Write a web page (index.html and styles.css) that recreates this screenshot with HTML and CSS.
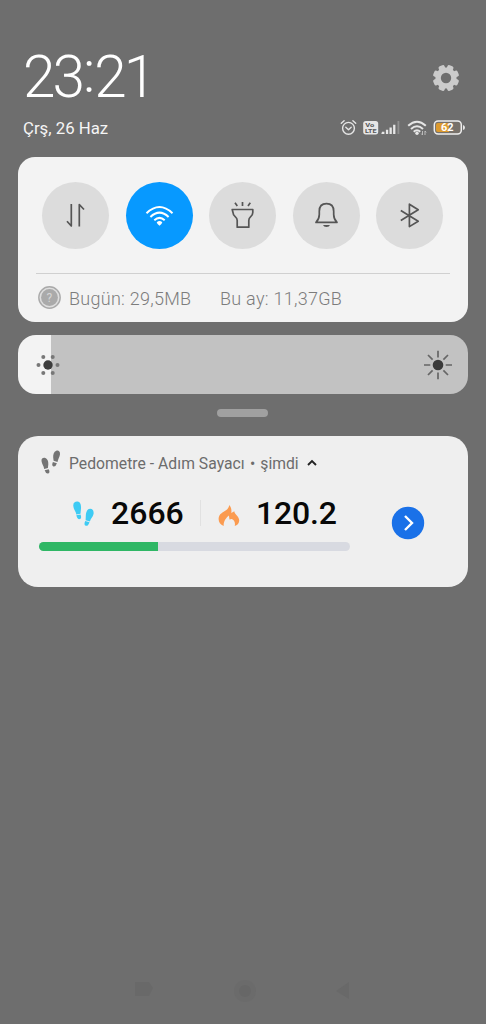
FILE: index.html
```html
<!DOCTYPE html>
<html lang="tr">
<head>
<meta charset="utf-8">
<title>Bildirimler</title>
<link rel="stylesheet" href="styles.css">
</head>
<body>
<main class="shade">
  <header class="header">
    <div class="clock-row">
      <div class="clock">23<span class="colon">:</span>21</div>
      <svg class="gear" width="28" height="28" viewBox="-14 -14 28 28">
        <g fill="#cbcbcb">
          <rect x="-3.2" y="-13.200" width="6.4" height="26.400" rx="1.800" transform="rotate(22.5)"/>
          <rect x="-3.2" y="-13.200" width="6.4" height="26.400" rx="1.800" transform="rotate(67.5)"/>
          <rect x="-3.2" y="-13.200" width="6.4" height="26.400" rx="1.800" transform="rotate(112.5)"/>
          <rect x="-3.2" y="-13.200" width="6.4" height="26.400" rx="1.800" transform="rotate(157.5)"/>
          <circle r="10.6"/>
        </g>
        <circle r="5.2" fill="#6e6e6e"/>
      </svg>
    </div>
    <div class="status-row">
      <div class="date">Çrş, 26 Haz</div>
      <svg class="status" width="130" height="20" viewBox="338 118 130 20">
        <g fill="none" stroke="#e6e6e6" stroke-width="1.4" stroke-linecap="round" stroke-linejoin="round">
          <circle cx="348.5" cy="128.3" r="5.9"/>
          <path d="M345.8 127.3l2.7 2.4 2.7-2.4M341.3 123.2l2.8-2.5M355.7 123.2l-2.8-2.5"/>
        </g>
        <rect x="363.2" y="121" width="15" height="13.4" rx="2.6" fill="#e6e6e6"/>
        <text class="volte" x="365.2" y="127.3" textLength="9" lengthAdjust="spacingAndGlyphs">Vo</text>
        <text class="volte" x="365" y="133.3" textLength="11.500" lengthAdjust="spacingAndGlyphs">LTE</text>
        <g fill="#e6e6e6">
          <path d="M382 131.7h2.4v2.3H381.300zM385.900 129.800h2.300v4.200h-2.300zM389.500 127.500h2.300v6.500h-2.300zM393.100 124.700h2.300v9.300h-2.300z"/>
          <path d="M397.500 121h1.800v13h-1.800z" fill="#909090"/>
        </g>
        <g fill="none" stroke="#e6e6e6" stroke-width="2">
          <path d="M408.200 125.700q8.800-8 17.600 0M411 128.900q6-5.300 12 0M413.700 131.700q3.300-2.800 6.600 0"/>
        </g>
        <circle cx="417" cy="133.200" r="1.700" fill="#e6e6e6"/>
        <path d="M422.500 135v-4M422.500 135l-1.200-1.400M425 131v4M425 131l1.200 1.400" stroke="#c4c4c4" stroke-width=".9" fill="none"/>
        <rect x="434.300" y="121" width="27" height="13" rx="3.800" fill="#77716a" stroke="#eee" stroke-width="1.500"/>
        <path d="M438 123h11v9h-11q-2 0-2-2v-5q0-2 2-2z" fill="#dc9a2e"/>
        <path d="M463 125q2 .5 2 2.500t-2 2.500z" fill="#e6e6e6"/>
        <text class="battery" x="441" y="131.300" textLength="12.500" lengthAdjust="spacingAndGlyphs">62</text>
      </svg>
    </div>
  </header>

  <section class="panel">
    <div class="toggles">
      <div class="toggle">
        <svg width="67" height="67" viewBox="0 0 67 67">
          <path class="line" d="M29.300 22v22l-4.300-4.800M37.300 44.500V22.500l4.700 5"/>
        </svg>
      </div>
      <div class="toggle toggle-on">
        <svg width="67" height="67" viewBox="0 0 67 67">
          <g fill="none" stroke="#fff" stroke-width="2">
            <path d="M20.500 31.200q13-12.400 26 0M24.400 34.900q9.100-8.500 18.200 0M28.300 38.200q5.200-4.600 10.400 0"/>
          </g>
          <path d="M30.700 40.200q2.800-2.300 5.600 0-.4 1.900-2.800 3.600-2.400-1.700-2.800-3.600z" fill="#fff"/>
        </svg>
      </div>
      <div class="toggle">
        <svg width="67" height="67" viewBox="0 0 67 67">
          <path class="line" d="M23.200 27.500h20.600v3q0 2.500-2.300 4.400-1.700 1.400-1.700 3.600v6.700H28.200v-6.700q0-2.200-1.800-3.600-2.400-1.900-2.400-4.400zM33.500 20v4M26 20.800l2.300 3.200M41.300 20.800l-2.300 3.200"/>
        </svg>
      </div>
      <div class="toggle">
        <svg width="67" height="67" viewBox="0 0 67 67">
          <path class="line" d="M23 40.400q3.300-3.400 3.300-8v-3.200q0-7.600 7.200-7.600t7.200 7.600v3.200q0 4.600 3.300 8z"/>
          <path d="M30 42.900h7q-.8 2-3.500 2t-3.500-2z" fill="#555"/>
        </svg>
      </div>
      <div class="toggle">
        <svg width="67" height="67" viewBox="0 0 67 67">
          <path class="line" d="M24.800 28.500l17.400 10.700-8.800 5.400V22.200l8.800 5.600-17.400 10.700"/>
        </svg>
      </div>
    </div>
    <div class="usage">
      <svg width="24" height="24" viewBox="0 0 24 24">
        <circle cx="12.500" cy="11.500" r="10.700" fill="#dedede" stroke="#aaa" stroke-width="1.400"/>
        <circle cx="12.500" cy="11.500" r="8.400" fill="#aaa"/>
        <text class="help" x="12.500" y="15.500" text-anchor="middle">?</text>
      </svg>
      <span class="today">Bugün: 29,5MB</span>
      <span class="month">Bu ay: 11,37GB</span>
    </div>
  </section>

  <section class="brightness">
    <svg width="28" height="28" viewBox="-14 -14 28 28">
      <circle r="4.700" fill="#3c3c3c"/>
      <g fill="#777"><circle cx="-9.500" r="2"/><circle cx="9.500" r="2"/><circle cx="-4.700" cy="-8" r="2"/><circle cx="4.700" cy="-8" r="2"/><circle cx="-4.700" cy="8" r="2"/><circle cx="4.700" cy="8" r="2"/></g>
    </svg>
    <svg width="30" height="30" viewBox="-15 -15 30 30">
      <circle r="5.300" fill="#3a3a3a"/>
      <path d="M0-14.300v6.800M0 14.300V7.500M-14 0h6.300M14 0H7.700M-10-10l4.600 4.600M10-10L5.400-5.400M-10 10l4.600-4.600M10 10L5.400 5.400" stroke="#666" stroke-width="1.700"/>
    </svg>
  </section>

  <div class="handle"></div>

  <section class="notification">
    <div class="app-row">
      <svg width="22" height="26" viewBox="0 0 22 26">
        <g fill="#747474">
          <path d="M.5 11C.2 8 2.500 7.200 4.300 7.900 7 9 7.500 12 7.300 14.500L6.900 18 3.200 19C2.800 15.800 .8 14 .5 11z"/>
          <path d="M3.700 20.300l4-1q1.700 3.500-.5 4.200T3.700 20.300z"/>
          <path d="M19 4.200C19.300 1.300 17.200 .1 15.300 .8 12.700 1.800 12 5 12.200 7.500L12.600 10.800 16.500 11.900C17 8.900 18.700 7.200 19 4.200z"/>
          <path d="M15.900 13.200l-4-1.100q-1.600 3.700.5 4.400T15.900 13.200z"/>
        </g>
      </svg>
      <span class="app-name">Pedometre - Adım Sayacı</span>
      <span class="dot">•</span>
      <span class="when">şimdi</span>
      <svg class="caret" width="12" height="8" viewBox="0 0 12 8"><path d="M2 6l4-4 4 4" fill="none" stroke="#222" stroke-width="1.900"/></svg>
    </div>
    <div class="content">
      <div class="activity">
        <div class="stats">
          <svg class="steps-icon" width="24" height="28" viewBox="0 0 24 28">
            <g fill="#3ecbf4">
              <path d="M1.300 6C1 2.500 3.200 1.300 5.500 1.500 8.500 1.800 9.200 5 9 8.500L8.500 13.700 4.300 14.600C4 11.500 1.600 9.600 1.300 6z"/>
              <path d="M4.300 15.200l4.300-.8q1.400 4.300-.9 4.700T4.300 15.200z"/>
              <path d="M21.600 13.800C22.100 10.500 20 8.500 17.800 8.800 14.900 9.300 14 12.500 13.800 15.800L13.600 20.300 17.900 21.500C18.500 18.700 21 17.200 21.600 13.800z"/>
              <path d="M17.500 22.200l-4.300-1.200q-1.700 4.200.6 4.800T17.500 22.200z"/>
            </g>
          </svg>
          <span class="steps">2666</span>
          <span class="separator"></span>
          <svg class="flame" width="22" height="22" viewBox="0 0 22 22">
            <path d="M11.300 0C13.300 2.400 13.700 4.700 13.300 8L16.300 6.200C16.600 9.500 21.500 11.300 21.200 15.700 20.900 18.500 19.300 20.200 16.700 21 17.600 17.500 16 14.600 13.800 13.900L11.500 14.600 10.900 10.600C8.600 12.400 5.200 16.400 5.700 21 2.300 19.800.5 17 .6 13.800.9 8.700 5 7.400 8 5.300 9.900 4 10.900 2.400 11.300 0z" fill="#fb9b50"/>
          </svg>
          <span class="calories">120.2</span>
        </div>
        <div class="progress"><div class="progress-value" style="width:38.200%"></div></div>
      </div>
      <svg class="open" width="34" height="34" viewBox="0 0 34 34">
        <circle cx="17" cy="17" r="16.200" fill="#1a71e8"/>
        <path d="M14 10l7 7-7 7" fill="none" stroke="#fff" stroke-width="2.400"/>
      </svg>
    </div>
  </section>

  <nav class="nav">
    <svg width="22" height="24" viewBox="0 0 22 24"><path d="M2 3h14l4 6-4 8H2z" fill="#696969"/></svg>
    <svg width="26" height="26" viewBox="0 0 26 26"><circle cx="13" cy="12" r="11" fill="#6b6b6b"/><circle cx="13" cy="12" r="6" fill="#676767"/></svg>
    <svg width="20" height="24" viewBox="0 0 20 24"><path d="M15 3v17L2 12z" fill="#696969"/></svg>
  </nav>
</main>
</body>
</html>
```

FILE: styles.css
```css
* { box-sizing: border-box; }
body { margin: 0; background: #6e6e6e; font-family: Roboto, sans-serif; }
svg { display: block; flex: none; }
span { white-space: nowrap; }
.shade { width: 486px; height: 1024px; padding: 48px 18px 0; display: flex; flex-direction: column; overflow: hidden; }

.header { height: 109px; flex: none; }
.clock-row { display: flex; justify-content: space-between; height: 62px; padding: 0 8px 0 5px; }
.clock { font: 300 58.5px/58px Roboto, sans-serif; letter-spacing: -3px; color: #fff; }
.colon { margin: 0 2px 0 1px; line-height: 0; vertical-align: 5px; }
.gear { margin-top: 16px; }
.status-row { display: flex; justify-content: space-between; padding: 8px 0 0 5px; }
.date { font-size: 16.8px; line-height: 20px; color: #f5f5f5; }
.volte { font: 700 6px Roboto, sans-serif; fill: #555; }
.battery { font: 700 10.5px Roboto, sans-serif; fill: #fff; }

.panel { height: 165px; flex: none; border-radius: 17px; background: #f3f3f3; padding: 25px 18px 0; }
.toggles { display: flex; justify-content: space-between; padding: 0 7px 0 6px; height: 91px; }
.toggle { width: 67px; height: 67px; border-radius: 50%; background: #dcdcdc; }
.toggle-on { background: #0799ff; }
.line { fill: none; stroke: #555; stroke-width: 1.7; stroke-linejoin: round; }
.usage { display: flex; align-items: center; border-top: 1px solid #d0d0d0; height: 49px; padding-left: 1px; font-size: 18px; font-weight: 300; letter-spacing: .27px; color: #7c7c7c; }
.today { margin-left: 8px; width: 151px; }
.help { font: 12px Roboto, sans-serif; fill: #d5d5d5; }

.brightness { height: 59px; flex: none; margin-top: 13px; border-radius: 18px; background: linear-gradient(90deg, #f3f3f3 33px, #c2c2c2 33px); display: flex; justify-content: space-between; align-items: center; padding: 0 15px 0 16px; }
.handle { width: 51px; height: 8px; flex: none; margin: 15px 0 0 199px; border-radius: 4px; background: #a0a0a0; }

.notification { height: 151px; flex: none; margin-top: 19px; border-radius: 20px; background: #efefef; padding: 13px 18px 0 21px; }
.app-row { display: flex; align-items: center; height: 28px; padding-left: 2px; font-size: 15.7px; color: #6c6c6c; }
.app-name { margin-left: 6px; width: 175px; letter-spacing: .03px; }
.dot { margin-left: 6px; }
.when { margin-left: 5px; }
.caret { margin-left: 7px; }
.content { display: flex; }
.activity { width: 311px; }
.stats { display: flex; height: 65px; align-items: center; padding: 7px 0 0 33px; }
.steps, .calories { font-size: 32px; line-height: 38px; font-weight: 500; color: #080808; }
.steps { margin-left: 15px; width: 74px; }
.steps-icon { margin-top: 1px; }
.separator { width: 1px; height: 26px; margin-left: 15px; background: #e1e1e1; }
.flame { margin: 5px 0 0 17px; }
.calories { margin-left: 16px; letter-spacing: -.15px; }
.progress { height: 9px; border-radius: 5px; background: #d8dae1; overflow: hidden; }
.progress-value { height: 100%; background: #2fb765; }
.open { margin: 29px 0 0 41px; }

.nav { margin-top: 392px; display: flex; justify-content: space-between; padding: 0 114px 0 115px; }
```
